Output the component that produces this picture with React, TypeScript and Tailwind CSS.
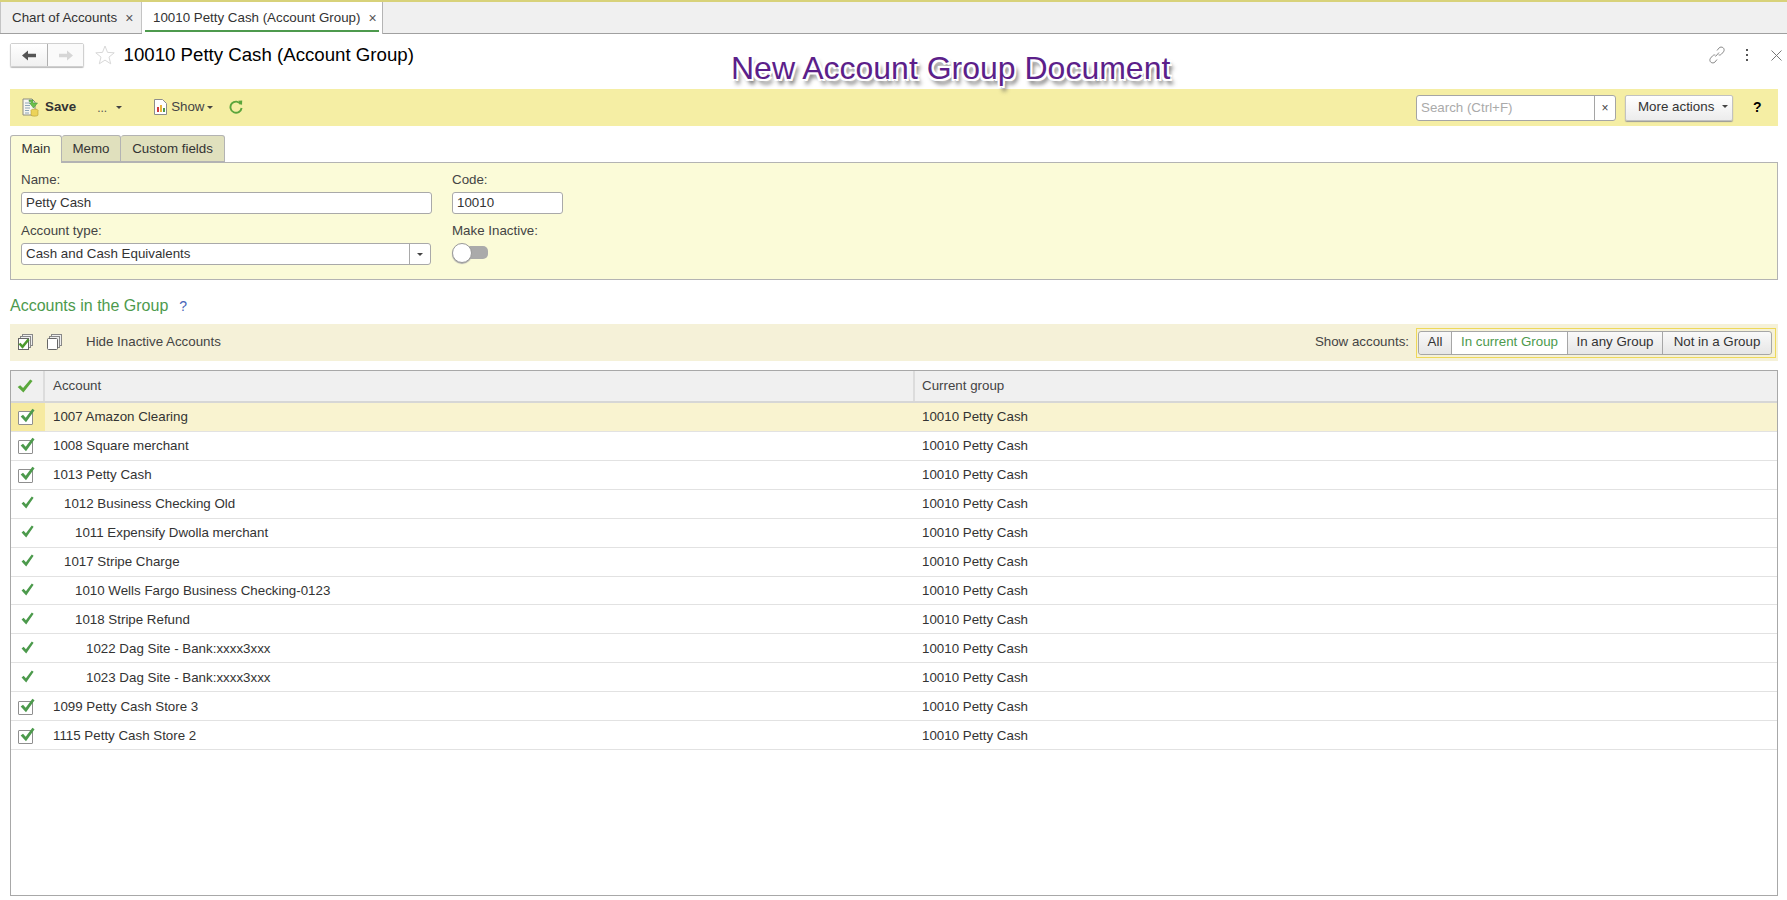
import React from "react";

const rows: [string, number, boolean][] = [
  ["1007 Amazon Clearing", 0, true],
  ["1008 Square merchant", 0, true],
  ["1013 Petty Cash", 0, true],
  ["1012 Business Checking Old", 1, false],
  ["1011 Expensify Dwolla merchant", 2, false],
  ["1017 Stripe Charge", 1, false],
  ["1010 Wells Fargo Business Checking-0123", 2, false],
  ["1018 Stripe Refund", 2, false],
  ["1022 Dag Site - Bank:xxxx3xxx", 3, false],
  ["1023 Dag Site - Bank:xxxx3xxx", 3, false],
  ["1099 Petty Cash Store 3", 0, true],
  ["1115 Petty Cash Store 2", 0, true],
];

const Caret = () => (
  <span className="inline-block w-0 h-0 border-x-[3px] border-x-transparent border-t-[3px] border-t-[#444]" />
);

const Check = ({ w = 14, h = 14, color = "#4c9a4c" }: { w?: number; h?: number; color?: string }) => (
  <svg width={w} height={h} viewBox="0 0 14 14" className="block" preserveAspectRatio="none">
    <path d="M0.6 8 L2.8 6.2 L5.3 9 L11.6 0.6 L13.6 2 L5.6 13.4 Z" fill={color} />
  </svg>
);

const BoxCheck = () => (
  <div className="relative w-[15px] h-[14px] border border-[#8f8f8f] rounded-[1px] bg-white mt-[3px]">
    <div className="absolute left-[1px] top-[-4px]">
      <Check w={15} h={15} />
    </div>
  </div>
);

const Field = ({ value, className }: { value: string; className: string }) => (
  <div className={`h-[22px] border border-[#a9a9a9] rounded-[3px] bg-white pl-[4px] flex items-center text-[#333] ${className}`}>
    {value}
  </div>
);

const GroupBtn = ({ label, width, active, first, last }: { label: string; width: string; active?: boolean; first?: boolean; last?: boolean }) => (
  <div
    className={`h-full pb-[1px] flex items-center justify-center ${width} ${first ? "rounded-l-[3px]" : "border-l border-l-[#a6a6a6]"} ${last ? "rounded-r-[3px]" : ""} ${
      active ? "bg-white text-[#4d9a4d]" : "bg-gradient-to-b from-[#f9f9f9] to-[#e6e6e6] text-[#333]"
    }`}
  >
    {label}
  </div>
);

export default function App() {
  return (
    <div className="relative w-full h-[900px] overflow-hidden bg-white flex flex-col text-[13.33px] text-[#333] [font-family:Liberation_Sans,Arial,sans-serif]">
      <div className="h-[2px] bg-[#d8d27a]" />
      {/* window tabs */}
      <div className="h-[32px] bg-[#f0f0f0] border-b border-b-[#a0a0a0] flex items-stretch shrink-0">
        <div className="w-[142px] border-l border-r border-[#c4c4c4] flex items-center pl-[11px] text-[#333]">
          <span>Chart of Accounts</span>
          <span className="ml-[8px] text-[#555] text-[14px] leading-none">×</span>
        </div>
        <div className="relative w-[241px] bg-white border-r border-[#b4b4b4] h-[32px] flex items-center pl-[11px] text-[#333]">
          <span>10010 Petty Cash (Account Group)</span>
          <span className="ml-[8px] text-[#555] text-[14px] leading-none">×</span>
          <div className="absolute left-[3px] right-[3px] bottom-[2px] h-[2px] bg-[#4d9a4d]" />
        </div>
      </div>
      {/* title row */}
      <div className="h-[55px] shrink-0 flex items-start pt-[9px] pl-[10px] pr-[5px]">
        <div className="flex h-[24px] w-[74px] rounded-[2px] border border-[#d0d0d0] shadow-[0_1px_1px_#bbb]">
          <div className="w-[37px] flex items-center justify-center bg-gradient-to-b from-white to-[#f0f0f0] border-r border-r-[#b0b0b0]">
            <svg width="14" height="11" viewBox="0 0 14 11"><path d="M0 5.5 L6 0.5 V3.8 H14 V7.2 H6 V10.5 Z" fill="#555" /></svg>
          </div>
          <div className="flex-1 flex items-center justify-center bg-[#fafafa]">
            <svg width="14" height="11" viewBox="0 0 14 11"><path d="M14 5.5 L8 0.5 V3.8 H0 V7.2 H8 V10.5 Z" fill="#d6d6d6" /></svg>
          </div>
        </div>
        <svg width="20" height="20" viewBox="0 0 20 20" className="ml-[11px] mt-[2px]">
          <path d="M10 1 L12.5 7.4 L19.2 7.8 L14 12.1 L15.7 18.8 L10 15.1 L4.3 18.8 L6 12.1 L0.8 7.8 L7.5 7.4 Z" fill="none" stroke="#d8d8d8" strokeWidth="1" />
        </svg>
        <div className="ml-[8.5px] text-[18.67px] leading-[23px] text-black">10010 Petty Cash (Account Group)</div>
        <div className="ml-auto flex items-center h-[24px]">
          <svg width="16" height="18" viewBox="0 0 16 18" fill="none" stroke="#8a8a8a" strokeWidth="1">
            <path d="M6.5 10.5 L10 6.5" />
            <path d="M8 4.5 L10 2 C11 0.8 13 0.8 14.2 1.8 C15.4 2.9 15.4 4.6 14.5 5.8 L12.4 8.2 C11.6 9 10.6 9.2 9.6 8.9" />
            <path d="M8 13.5 L6 16 C5 17.2 3 17.2 1.8 16.2 C0.6 15.1 0.6 13.4 1.5 12.2 L3.6 9.8 C4.4 9 5.4 8.8 6.4 9.1" />
          </svg>
          <div className="ml-[21px] flex flex-col gap-[2.5px]">
            <span className="w-[2.5px] h-[2.5px] bg-[#555]" />
            <span className="w-[2.5px] h-[2.5px] bg-[#555]" />
            <span className="w-[2.5px] h-[2.5px] bg-[#555]" />
          </div>
          <svg width="11" height="11" viewBox="0 0 11 11" className="ml-[23px]" stroke="#777" strokeWidth="1"><path d="M0.5 0.5 L10.5 10.5 M10.5 0.5 L0.5 10.5" /></svg>
        </div>
      </div>
      {/* toolbar */}
      <div className="h-[37px] shrink-0 ml-[10px] mr-[9px] bg-[#f5eea4] flex items-center">
        <svg width="17" height="19" viewBox="0 0 17 19" className="ml-[12px] mb-[1px]">
          <path d="M1 1 H10 L13 4 V17 H1 Z" fill="#f7f7f0" stroke="#8c8c80" strokeWidth="1" />
          <path d="M3 5 H8 M3 7.5 H8 M3 10 H8 M3 12.5 H7 M3 15 H7" stroke="#8fa6b8" strokeWidth="1" />
          <path d="M7 2 H11 V5 H15.5 L11.5 10 L7.5 5 H9 V3.5 H7 Z" fill="#6cc04a" stroke="#3f8f3f" strokeWidth="0.5" />
          <ellipse cx="12.5" cy="12.5" rx="3.5" ry="1.5" fill="#ecd35a" stroke="#a98f2a" strokeWidth="0.5" />
          <path d="M9 12.5 V17 C9 18.5 16 18.5 16 17 V12.5" fill="#ecd35a" stroke="#a98f2a" strokeWidth="0.5" />
        </svg>
        <span className="ml-[6px] font-bold text-[#333] mb-[2px]">Save</span>
        <span className="ml-[21px] text-[#555] text-[12px]">...</span>
        <span className="ml-[9px] flex"><Caret /></span>
        <svg width="13" height="16" viewBox="0 0 13 16" className="ml-[32px] mb-[1px]">
          <path d="M0.5 0.5 H8.5 L12.5 4.5 V15.5 H0.5 Z" fill="#fff" stroke="#8c8c8c" />
          <rect x="3" y="8" width="2" height="5" fill="#d13c3c" />
          <rect x="6" y="6" width="2" height="7" fill="#e7b43c" />
          <rect x="9" y="9" width="2" height="4" fill="#4c9a4c" />
        </svg>
        <span className="ml-[4px] text-[#444] mb-[2px]">Show</span>
        <span className="ml-[2px] flex"><Caret /></span>
        <svg width="14" height="14" viewBox="0 0 14 14" className="ml-[16px] mb-[1px]" fill="none">
          <path d="M11.8 4.2 A5.6 5.6 0 1 0 12.6 8" stroke="#5ba53c" strokeWidth="1.9" />
          <path d="M9.2 0.8 L13.2 0.6 L13 5.2 Z" fill="#5ba53c" />
        </svg>
        <div className="ml-auto flex items-center">
          <div className="w-[200px] h-[26px] border border-[#a5a5a5] rounded-[3px] bg-white flex items-stretch">
            <div className="flex-1 flex items-center pl-[4px] text-[#aaa]">Search (Ctrl+F)</div>
            <div className="w-[21px] border-l border-l-[#a5a5a5] flex items-center justify-center text-[#444] text-[12px]">×</div>
          </div>
          <div className="ml-[9px] w-[108px] h-[26px] rounded-[2px] border border-[#c2c2c2] shadow-[0_1px_1px_#999] bg-gradient-to-b from-white to-[#ececec] flex items-center pl-[12px] pb-[2px] text-[#333]">
            More actions
            <span className="ml-[8px] flex"><Caret /></span>
          </div>
          <span className="ml-[20px] mr-[17px] w-[8px] mb-[1px] text-black text-[14px] font-bold">?</span>
        </div>
      </div>
      {/* form tabs */}
      <div className="mt-[9px] ml-[10px] h-[27px] shrink-0 flex relative z-10">
        <div className="w-[52px] h-[28px] border border-[#b3b3b3] border-b-0 rounded-t-[3px] bg-[#fbfbd8] flex items-center justify-center text-[#333] pb-[1px]">Main</div>
        <div className="w-[59px] h-[27px] border border-l-0 border-[#b3b3b3] rounded-t-[3px] bg-[#e0e0bd] flex items-center justify-center text-[#333]">Memo</div>
        <div className="w-[104px] h-[27px] border border-l-0 border-[#b3b3b3] rounded-t-[3px] bg-[#e0e0bd] flex items-center justify-center text-[#333]">Custom fields</div>
      </div>
      <div className="ml-[10px] mr-[9px] h-[118px] shrink-0 border border-[#b3b3b3] bg-[#fbfbd8] pl-[10px] flex">
        <div className="w-[411px] flex flex-col">
          <div className="mt-[7px] h-[20px] flex items-center text-[#444]">Name:</div>
          <Field value="Petty Cash" className="mt-[2px] w-[411px]" />
          <div className="mt-[5px] h-[23px] flex items-center text-[#444]">Account type:</div>
          <div className="mt-[1px] w-[410px] h-[22px] border border-[#a9a9a9] rounded-[3px] bg-white flex items-stretch">
            <div className="flex-1 pl-[4px] flex items-center text-[#333]">Cash and Cash Equivalents</div>
            <div className="w-[21px] border-l border-l-[#a9a9a9] flex items-center justify-center"><Caret /></div>
          </div>
        </div>
        <div className="ml-[20px] flex flex-col">
          <div className="mt-[7px] h-[20px] flex items-center text-[#444]">Code:</div>
          <Field value="10010" className="mt-[2px] w-[111px]" />
          <div className="mt-[5px] h-[23px] flex items-center text-[#444]">Make Inactive:</div>
          <div className="relative mt-[1px] w-[36px] h-[20px]">
            <div className="absolute left-[8px] right-0 top-[3px] h-[13px] bg-[#aaa] rounded-r-[5px]" />
            <div className="absolute left-0 top-0 w-[20px] h-[20px] rounded-full bg-white border border-[#999] shadow-[0_1px_1px_#aaa]" />
          </div>
        </div>
      </div>
      {/* section title */}
      <div className="h-[44px] shrink-0 ml-[10px] flex items-center pt-[8px]">
        <span className="text-[16px] text-[#4d9a4d]">Accounts in the Group</span>
        <span className="ml-[11px] text-[14px] text-[#4a66b8]">?</span>
      </div>
      {/* sub toolbar */}
      <div className="h-[37px] shrink-0 ml-[10px] mr-[9px] bg-[#f5f1d8] flex items-center">
        <svg width="16" height="16" viewBox="0 0 16 16" className="ml-[8px] mb-[2px]" fill="none">
          <rect x="4.5" y="0.5" width="10" height="11" fill="#eee" stroke="#888" />
          <rect x="2.5" y="2.5" width="10" height="11" fill="#eee" stroke="#888" />
          <rect x="0.5" y="4.5" width="10" height="11" fill="#fff" stroke="#666" />
          <path d="M1.5 9.5 L4.5 12.8 L10.5 5.5" stroke="#4c9a2c" strokeWidth="2.6" />
        </svg>
        <svg width="16" height="16" viewBox="0 0 16 16" className="ml-[13px] mb-[2px]" fill="none">
          <rect x="4.5" y="0.5" width="10" height="11" fill="#eee" stroke="#888" />
          <rect x="2.5" y="2.5" width="10" height="11" fill="#eee" stroke="#888" />
          <rect x="0.5" y="4.5" width="10" height="11" rx="1" fill="#fff" stroke="#666" />
        </svg>
        <span className="ml-[23px] text-[#444] mb-[2px]">Hide Inactive Accounts</span>
        <div className="ml-auto flex items-center">
          <span className="text-[#444] mr-[7px] mb-[2px]">Show accounts:</span>
          <div className="h-[30px] w-[360px] border border-[#eed85a] py-[2px] pl-[1px] pr-[3px] mr-[2px]">
            <div className="h-[24px] flex items-stretch border border-[#a6a6a6] rounded-[3px] overflow-hidden">
              <GroupBtn label="All" width="w-[32px]" first />
              <GroupBtn label="In current Group" width="w-[116px]" active />
              <GroupBtn label="In any Group" width="w-[95px]" />
              <GroupBtn label="Not in a Group" width="flex-1" last />
            </div>
          </div>
        </div>
      </div>
      {/* table */}
      <div className="mt-[9px] ml-[10px] mr-[9px] h-[526px] shrink-0 border border-[#a8a8a8] flex flex-col">
        <div className="h-[32px] shrink-0 grid grid-cols-[34px_870px_1fr] border-b-[2px] border-b-[#d6d6d6] bg-[#f0f0f0]">
          <div className="border-r-[2px] border-r-[#dcdcdc] flex items-center pl-[6px]">
            <Check w={16} h={14} color="#5aa83c" />
          </div>
          <div className="border-r-[2px] border-r-[#dcdcdc] flex items-center pl-[8px] pb-[1px] text-[#444]">Account</div>
          <div className="flex items-center pl-[7px] pb-[1px] text-[#444]">Current group</div>
        </div>
        {rows.map(([name, lvl, box], i) => (
          <div key={name} className={`h-[28.93px] shrink-0 grid grid-cols-[34px_870px_1fr] border-b border-b-[#e2e2e2] ${i === 0 ? "bg-[#f9f3d0]" : ""}`}>
            <div className={`flex items-center ${box ? "pl-[7px]" : "pl-[10px] pb-[2px]"} ${i === 0 ? "bg-[#f6eaa0]" : ""}`}>
              {box ? <BoxCheck /> : <Check w={13} h={13} />}
            </div>
            <div className="flex items-center pl-[8px] pt-[1px] text-[#333]">
              <span style={{ marginLeft: lvl * 11 }}>{name}</span>
            </div>
            <div className="flex items-center pl-[7px] pt-[1px] text-[#333]">10010 Petty Cash</div>
          </div>
        ))}
      </div>
      {/* overlay caption */}
      <div className="absolute left-[731px] top-[48px] text-[32px] leading-[40px] text-[#5c1f8a] whitespace-nowrap [text-shadow:1px_0_0_#fff,-1px_0_0_#fff,0_1px_0_#fff,0_-1px_0_#fff,2px_2px_0_#fff,-2px_2px_0_#fff,2px_-2px_0_#fff,-2px_-2px_0_#fff,3px_5px_4px_#555]">
        New Account Group Document
      </div>
    </div>
  );
}
